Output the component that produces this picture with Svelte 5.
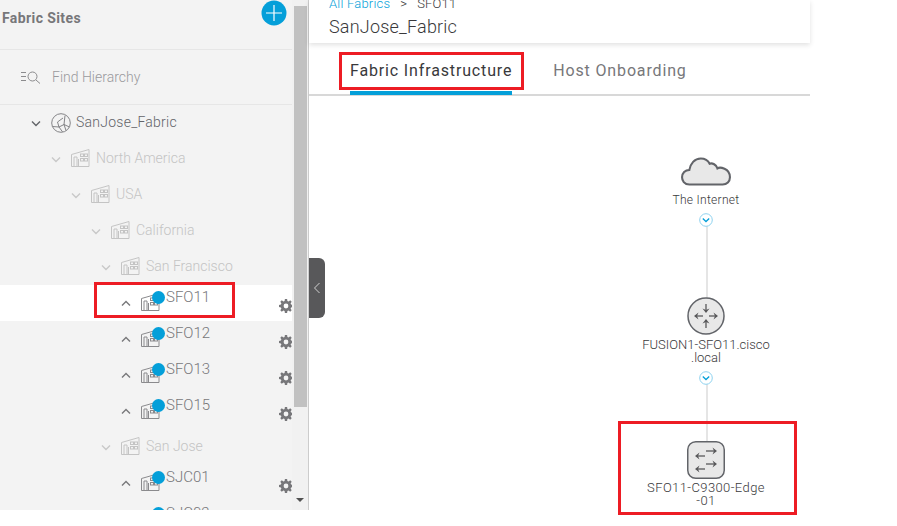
<script>
  const rows = [
    { name: 'SanJose_Fabric', left: 31, kind: 'root' },
    { name: 'North America', left: 51, kind: 'area' },
    { name: 'USA', left: 71, kind: 'area' },
    { name: 'California', left: 91, kind: 'area' },
    { name: 'San Francisco', left: 101, kind: 'area' },
    { name: 'SFO11', left: 121, kind: 'site', active: true },
    { name: 'SFO12', left: 121, kind: 'site' },
    { name: 'SFO13', left: 121, kind: 'site' },
    { name: 'SFO15', left: 121, kind: 'site' },
    { name: 'San Jose', left: 101, kind: 'area' },
    { name: 'SJC01', left: 121, kind: 'site' },
    { name: 'SJC02', left: 121, kind: 'site' }
  ]

  const gear = 'M5.9 0h2.2l.3 1.9 1.2.5 1.6-1.1 1.500 1.500-1.1 1.600.5 1.200 1.900.3v2.200l-1.900.3-.5 1.200 1.100 1.600-1.500 1.500-1.600-1.100-1.200.5-.3 1.900H5.900l-.3-1.900-1.200-.5-1.600 1.100-1.500-1.500 1.100-1.600-.5-1.200L0 8.100V5.900l1.900-.3.5-1.200-1.100-1.600 1.500-1.500 1.600 1.100 1.200-.5zM7 4.600a2.400 2.400 0 1 0 0 4.800 2.400 2.400 0 0 0 0-4.800z'
</script>

<div class="page">
  <aside class="sidebar">
    <div class="panel">
      <div class="panel-head">
        <h2>Fabric Sites</h2>
        <span class="add">
          <svg width="26" height="26" viewBox="0 0 26 26"><circle cx="13" cy="13" r="12.500" fill="#049fd9" /><path d="M13 5v16M5 13h16" stroke="#fff" stroke-width="1.200" /></svg>
        </span>
      </div>
      <div class="find">
        <svg width="21" height="14" viewBox="0 0 21 14" fill="none" stroke="#8b8b8d" stroke-width="1"><path d="M0 2.500h5M0 6.500h5M0 10.500h5" /><circle cx="11.500" cy="6.500" r="4.500" /><path d="M15 10l4 3.500" /></svg>
        <span>Find Hierarchy</span>
      </div>
      <ul class="tree">
        {#each rows as row}
          <li class="row {row.kind}" class:active={row.active} style="padding-left: {row.left}px">
            <svg class="chev" width="10" height="6" viewBox="0 0 10 6" fill="none" stroke="currentColor" stroke-width="1.400">
              {#if row.kind === 'site'}
                <path d="M1 5.500l4-4 4 4" />
              {:else}
                <path d="M1 .5l4 4 4-4" />
              {/if}
            </svg>
            {#if row.kind === 'root'}
              <svg class="icon" width="20" height="20" viewBox="0 0 20 20" fill="none" stroke="#77777a" stroke-width=".9">
                <circle cx="10" cy="10" r="9.300" />
                <path d="M1.500 13.500L8 14l5-2.500 1-9M8 14l-1.500-5L12 5M8 14l3.500 4.800M13 11.500l5.500 2.500M13 11.500l2 6" />
              </svg>
            {:else}
              <span class="building">
                <svg class="icon" width="19" height="18" viewBox="0 0 19 18" fill="none" stroke="currentColor" stroke-width="1">
                  <path d="M.5 17.500V5.500l17.500-5v17zM3 17.500V8h3v9.500M7.500 17.500V10" />
                  <rect x="9.500" y="5" width="3" height="2.500" /><rect x="13.500" y="5" width="3" height="2.500" /><rect x="9.500" y="9.500" width="3" height="2.500" /><rect x="13.500" y="9.500" width="3" height="2.500" />
                </svg>
                {#if row.kind === 'site'}<i class="dot"></i>{/if}
              </span>
            {/if}
            <span class="label">{row.name}</span>
            {#if row.kind === 'site'}
              <svg class="gear" width="14" height="14" viewBox="0 0 14 14"><path d={gear} fill="#77777a" fill-rule="evenodd" /></svg>
            {/if}
          </li>
        {/each}
      </ul>
    </div>
    <div class="scrollbar">
      <div class="thumb"></div>
      <span class="arrow"></span>
    </div>
  </aside>

  <main class="content">
    <header class="top">
      <div class="crumbs"><a href="#top">All Fabrics</a><b>&gt;</b><span>SFO11</span></div>
      <h1>SanJose_Fabric</h1>
    </header>
    <nav class="tabs">
      <span class="tab current">Fabric Infrastructure</span>
      <span class="tab">Host Onboarding</span>
    </nav>
    <section class="canvas">
      <div class="handle">
        <svg width="8" height="12" viewBox="0 0 8 12" fill="none" stroke="#d0d0d0" stroke-width="1"><path d="M6.500 1L1.500 6l5 5" /></svg>
      </div>

      <div class="link one"></div>
      <div class="link two"></div>

      <div class="node internet">
        <svg width="50" height="29" viewBox="0 0 48 27"><path d="M8 26C3 26 1 22 1 19c0-4 3-7 7-7C9 6 13 1 19 1c4 0 7 2 8.500 5 2.500-1 6.500 1 7.500 4.500C37 9 47 10 47 19c0 4-3 7-7 7z" fill="#e8e8e8" stroke="#626469" stroke-width="2" /></svg>
        <span>The Internet</span>
        <svg class="toggle" width="14" height="14" viewBox="0 0 14 14" fill="#fff"><circle cx="7" cy="7" r="6.300" stroke="#8ed2ef" /><path d="M3.800 5.500L7 8.500l3.200-3" fill="none" stroke="#049fd9" stroke-width="1.300" /></svg>
      </div>

      <div class="node fusion">
        <svg width="38" height="38" viewBox="0 0 38 38" fill="none">
          <circle cx="19" cy="19" r="18" fill="#e8e8e8" stroke="#626469" stroke-width="1.500" />
          <g stroke="#58585a" stroke-width="1.300">
            <path d="M19 7v8" />
            <path d="M19 31v-8" />
            <path d="M16 19H8" />
            <path d="M22 19h8" />
          </g>
          <path d="M15.500 11.500L19 16l3.500-4.500L19 13zM15.500 26.500L19 22l3.500 4.500L19 25zM11.500 15.500L7 19l4.500 3.500L10 19zM26.500 15.500L31 19l-4.500 3.500L28 19z" fill="#58585a" />
        </svg>
        <span>FUSION1-SFO11.cisco<br />.local</span>
        <svg class="toggle" width="14" height="14" viewBox="0 0 14 14" fill="#fff"><circle cx="7" cy="7" r="6.300" stroke="#8ed2ef" /><path d="M3.800 5.500L7 8.500l3.200-3" fill="none" stroke="#049fd9" stroke-width="1.300" /></svg>
      </div>

      <div class="node edge">
        <svg width="38" height="38" viewBox="0 0 38 38" fill="none">
          <rect x=".75" y=".75" width="36.500" height="36.500" rx="8" fill="#e8e8e8" stroke="#626469" stroke-width="1.500" />
          <g stroke="#58585a" stroke-width="1.300">
            <path d="M19 10h9" />
            <path d="M18 15H10" />
            <path d="M19 23h9" />
            <path d="M18 28H10" />
          </g>
          <path d="M25.500 6.500L30 10l-4.500 3.500L27 10zM12.500 11.500L8 15l4.500 3.500L11 15zM25.500 19.500L30 23l-4.500 3.500L27 23zM12.500 24.500L8 28l4.500 3.500L11 28z" fill="#58585a" />
        </svg>
        <span>SFO11-C9300-Edge<br />-01</span>
      </div>
    </section>
  </main>

  <div class="mark m-tab"></div>
  <div class="mark m-site"></div>
  <div class="mark m-edge"></div>
</div>

<style>
  :global(body) {
    background: #fff;
  }
  .page {
    position: relative;
    display: flex;
    width: 897px;
    height: 526px;
    overflow: hidden;
    font-family: Roboto, "Liberation Sans", sans-serif;
  }
  .sidebar {
    display: flex;
    height: 510px;
    width: 309px;
    border-right: 1px solid #ccc;
    box-sizing: border-box;
    flex: none;
  }
  .panel {
    width: 292px;
    background: #f3f3f3;
    overflow: hidden;
    flex: none;
  }
  .panel-head {
    display: flex;
    justify-content: space-between;
    height: 49px;
    border-bottom: 1px solid #e6e6e6;
  }
  .panel-head h2 {
    margin: 11px 0 0 2px;
    font-size: 14px;
    line-height: 15px;
    font-weight: 700;
    color: #77777a;
    letter-spacing: 0.4px;
  }
  .add {
    margin: 0 5px 0 0;
    height: 26px;
  }
  .find {
    display: flex;
    align-items: center;
    gap: 10px;
    height: 54px;
    padding-left: 21px;
    border-bottom: 1px solid #e6e6e6;
    font-size: 14px;
    font-weight: 300;
    color: #9a9a9d;
  }
  .tree {
    list-style: none;
    margin: 0;
    padding: 0;
  }
  .row {
    display: flex;
    align-items: center;
    height: 36px;
    font-size: 14px;
    font-weight: 300;
    color: #c4c4c4;
  }
  .row.active {
    background: #fff;
  }
  .chev {
    margin-right: 10px;
    flex: none;
  }
  .root {
    color: #626469;
    letter-spacing: 0.25px;
  }
  .root .chev,
  .area .chev {
    margin-top: 2px;
    margin-right: 10px;
  }
  .root .icon {
    margin-top: -1px;
    margin-right: -1px;
  }
  .root .label,
  .area .label {
    margin-top: -2px;
    margin-left: 6px;
  }
  .area .chev {
    color: #c8c8c8;
  }
  .site {
    color: #8a8a8d;
  }
  .site .chev {
    color: #77777a;
    margin-top: -1px;
  }
  .building {
    position: relative;
    display: flex;
    margin-top: -2px;
  }
  .dot {
    position: absolute;
    top: -2px;
    left: 11px;
    width: 13px;
    height: 13px;
    border-radius: 50%;
    background: #049fd9;
  }
  .site .label {
    margin: -12px 0 0 6px;
    font-size: 15px;
    color: #77777a;
  }
  .gear {
    margin: 5px 0 0 auto;
    transform: translateX(1px);
  }
  .scrollbar {
    position: relative;
    flex: 1;
    background: #f1f1f1;
  }
  .thumb {
    margin: 6px 1px 0 2px;
    height: 401px;
    background: #c1c1c1;
  }
  .arrow {
    position: absolute;
    left: 4px;
    bottom: 8px;
    border: 4px solid transparent;
    border-top: 4px solid #505050;
    border-bottom: 0;
  }
  .content {
    width: 501px;
    flex: none;
    display: flex;
    flex-direction: column;
  }
  .top {
    height: 43px;
    box-sizing: border-box;
    padding-left: 20px;
    box-shadow: 0 2px 5px rgba(0, 0, 0, 0.12);
    position: relative;
    z-index: 1;
  }
  .crumbs {
    display: flex;
    gap: 10px;
    margin-top: -4px;
    height: 15px;
    line-height: 15px;
    font-size: 13px;
    font-weight: 300;
    letter-spacing: 0.2px;
    color: #39393b;
  }
  .crumbs a {
    color: #049fd9;
    text-decoration: none;
  }
  .crumbs b {
    font-weight: 300;
  }
  .top h1 {
    margin: 6px 0 0;
    font-size: 18px;
    line-height: 20px;
    font-weight: 300;
    color: #39393b;
    letter-spacing: 0.2px;
  }
  .tabs {
    display: flex;
    gap: 41px;
    height: 53px;
    box-sizing: border-box;
    padding-left: 41px;
    border-bottom: 2px solid #d8d8d8;
  }
  .tab {
    height: 52px;
    box-sizing: border-box;
    padding-top: 18px;
    font-size: 16px;
    line-height: 20px;
    letter-spacing: 0.85px;
    color: #77777a;
  }
  .tab.current {
    color: #39393b;
    border-bottom: 4px solid #049fd9;
  }
  .canvas {
    position: relative;
    flex: 1;
  }
  .handle {
    position: absolute;
    left: 0;
    top: 162px;
    width: 16px;
    height: 60px;
    display: flex;
    align-items: center;
    justify-content: center;
    background: #58585a;
    border-radius: 0 6px 6px 0;
  }
  .link {
    position: absolute;
    left: 397px;
    width: 2px;
    background: #e5e5e5;
  }
  .link.one {
    top: 130px;
    height: 72px;
  }
  .link.two {
    top: 288px;
    height: 58px;
  }
  .node {
    position: absolute;
    left: 332px;
    width: 130px;
    display: flex;
    flex-direction: column;
    align-items: center;
    font-size: 13px;
    line-height: 13px;
    text-align: center;
    color: #39393b;
    font-weight: 300;
    white-space: nowrap;
  }
  .internet {
    top: 61px;
    font-size: 12px;
    letter-spacing: 0.3px;
  }
  .internet span {
    margin-top: 8px;
  }
  .fusion {
    top: 201px;
  }
  .fusion span {
    margin-top: 3px;
  }
  .fusion .toggle {
    margin-top: 7px;
  }
  .edge {
    top: 345px;
    letter-spacing: 0.4px;
  }
  .edge span {
    margin-top: 2px;
  }
  .toggle {
    margin-top: 6px;
    position: relative;
    z-index: 1;
  }
  .mark {
    position: absolute;
    box-sizing: border-box;
    border: 3px solid #ed1c24;
    z-index: 2;
  }
  .m-tab {
    left: 339px;
    top: 52px;
    width: 185px;
    height: 38px;
  }
  .m-site {
    left: 94px;
    top: 282px;
    width: 141px;
    height: 36px;
  }
  .m-edge {
    left: 618px;
    top: 421px;
    width: 179px;
    height: 94px;
  }
</style>
